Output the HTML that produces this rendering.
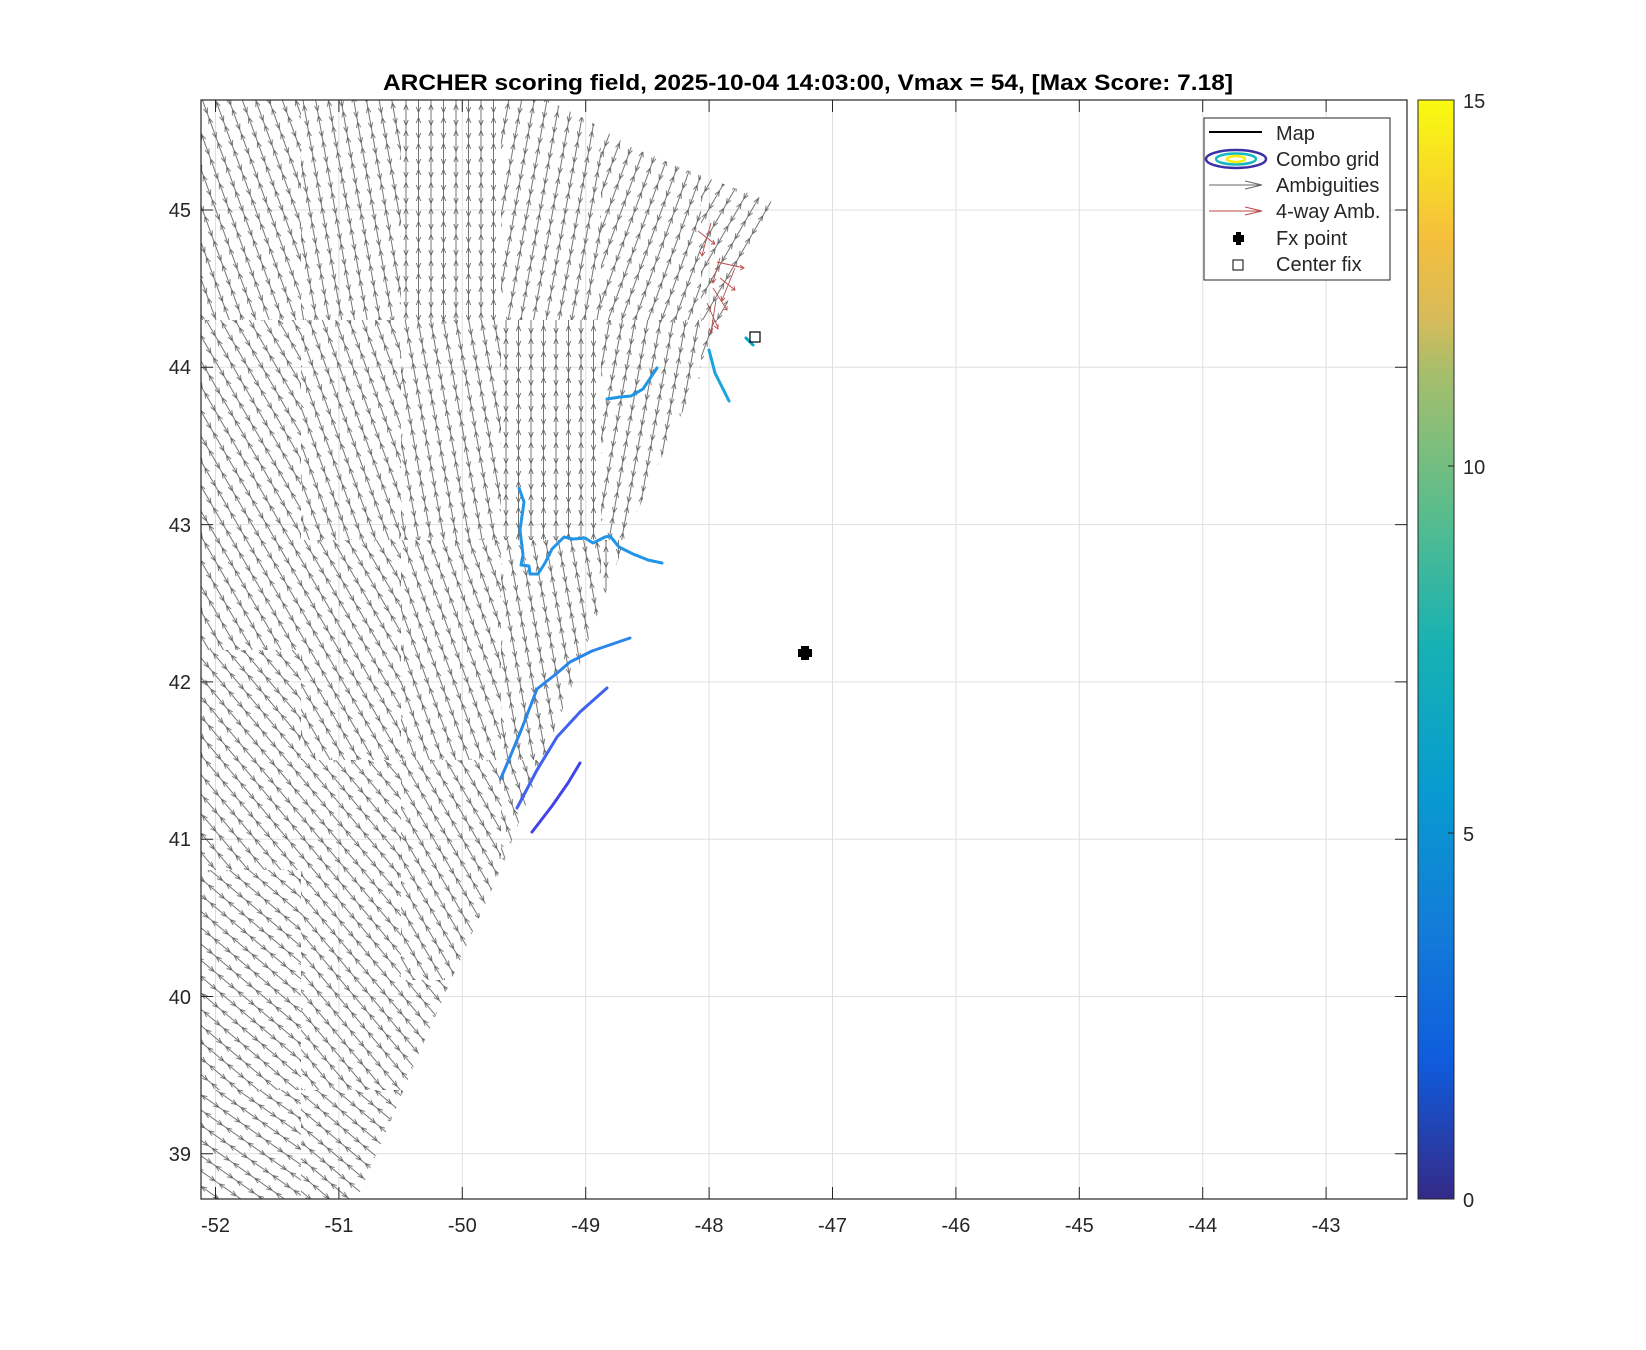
<!DOCTYPE html>
<html><head><meta charset="utf-8"><style>
html,body{margin:0;padding:0;background:#fff;}
svg{display:block;}
text{font-family:"Liberation Sans","DejaVu Sans",sans-serif;fill:#262626;}
</style></head><body>
<svg width="1646" height="1350" viewBox="0 0 1646 1350" xmlns="http://www.w3.org/2000/svg">
<defs>
<linearGradient id="par" x1="0" y1="1" x2="0" y2="0">
<stop offset="0" stop-color="#352a87"/><stop offset="0.125" stop-color="#0f5cdd"/>
<stop offset="0.25" stop-color="#127dd8"/><stop offset="0.375" stop-color="#079ccf"/>
<stop offset="0.5" stop-color="#15b1b4"/><stop offset="0.625" stop-color="#59bd8c"/>
<stop offset="0.75" stop-color="#a5be6b"/><stop offset="0.8" stop-color="#d6bb5a"/><stop offset="0.875" stop-color="#f5bf3c"/>
<stop offset="1" stop-color="#f9fb0e"/></linearGradient>
<g id="tile" stroke="#666" stroke-width="0.9" fill="none">
<path d="M6 0V26M3.8 6L6 0.5L8.2 6M3.8 16L6 21.5L8.2 16"/>
<path d="M18.5 -13V39M16.3 -7L18.5 -12.5L20.7 -7M16.3 3L18.5 8.5L20.7 3M16.3 19L18.5 13.5L20.7 19M16.3 29L18.5 34.5L20.7 29"/>
</g>
<pattern id="p-30" patternUnits="userSpaceOnUse" width="25" height="26" patternTransform="rotate(30)"><use href="#tile"/></pattern>
<pattern id="p-20" patternUnits="userSpaceOnUse" width="25" height="26" patternTransform="rotate(20)"><use href="#tile"/></pattern>
<pattern id="p-10" patternUnits="userSpaceOnUse" width="25" height="26" patternTransform="rotate(10)"><use href="#tile"/></pattern>
<pattern id="p0" patternUnits="userSpaceOnUse" width="25" height="26"><use href="#tile"/></pattern>
<pattern id="p10" patternUnits="userSpaceOnUse" width="25" height="26" patternTransform="rotate(-10)"><use href="#tile"/></pattern>
<pattern id="p20" patternUnits="userSpaceOnUse" width="25" height="26" patternTransform="rotate(-20)"><use href="#tile"/></pattern>
<pattern id="p30" patternUnits="userSpaceOnUse" width="25" height="26" patternTransform="rotate(-30)"><use href="#tile"/></pattern>
<pattern id="p40" patternUnits="userSpaceOnUse" width="25" height="26" patternTransform="rotate(-40)"><use href="#tile"/></pattern>
<pattern id="p50" patternUnits="userSpaceOnUse" width="25" height="26" patternTransform="rotate(-50)"><use href="#tile"/></pattern>
<pattern id="p60" patternUnits="userSpaceOnUse" width="25" height="26" patternTransform="rotate(-55)"><use href="#tile"/></pattern>
<clipPath id="field"><polygon points="201,100 547,100 589,121 631,147 694,173 772,202 736,273 715,347 673,431 631,526 599,610 573,683 536,778 504,862 462,956 420,1051 389,1125 357,1199 201,1199"/></clipPath>
</defs>
<rect x="201" y="100" width="1206" height="1099" fill="#fff"/>
<g stroke="#dfdfdf" stroke-width="1">
<line x1="215.5" y1="100" x2="215.5" y2="1199"/><line x1="338.9" y1="100" x2="338.9" y2="1199"/><line x1="462.3" y1="100" x2="462.3" y2="1199"/><line x1="585.7" y1="100" x2="585.7" y2="1199"/><line x1="709.1" y1="100" x2="709.1" y2="1199"/><line x1="832.5" y1="100" x2="832.5" y2="1199"/><line x1="955.9" y1="100" x2="955.9" y2="1199"/><line x1="1079.3" y1="100" x2="1079.3" y2="1199"/><line x1="1202.7" y1="100" x2="1202.7" y2="1199"/><line x1="1326.1" y1="100" x2="1326.1" y2="1199"/>
<line x1="201" y1="210" x2="1407" y2="210"/><line x1="201" y1="367.3" x2="1407" y2="367.3"/><line x1="201" y1="524.6" x2="1407" y2="524.6"/><line x1="201" y1="681.9" x2="1407" y2="681.9"/><line x1="201" y1="839.2" x2="1407" y2="839.2"/><line x1="201" y1="996.5" x2="1407" y2="996.5"/><line x1="201" y1="1153.8" x2="1407" y2="1153.8"/>
</g>
<g clip-path="url(#field)">
<!-- row0 y100-210 -->
<rect x="201" y="100" width="100" height="110" fill="url(#p20)"/><rect x="301" y="100" width="100" height="110" fill="url(#p10)"/><rect x="401" y="100" width="100" height="110" fill="url(#p0)"/><rect x="501" y="100" width="100" height="110" fill="url(#p-10)"/><rect x="601" y="100" width="100" height="110" fill="url(#p-20)"/><rect x="701" y="100" width="100" height="110" fill="url(#p-30)"/>
<!-- row1 -->
<rect x="201" y="210" width="100" height="110" fill="url(#p20)"/><rect x="301" y="210" width="100" height="110" fill="url(#p10)"/><rect x="401" y="210" width="100" height="110" fill="url(#p0)"/><rect x="501" y="210" width="100" height="110" fill="url(#p-10)"/><rect x="601" y="210" width="100" height="110" fill="url(#p-20)"/><rect x="701" y="210" width="100" height="110" fill="url(#p-30)"/>
<!-- row2 -->
<rect x="201" y="320" width="100" height="110" fill="url(#p30)"/><rect x="301" y="320" width="100" height="110" fill="url(#p20)"/><rect x="401" y="320" width="100" height="110" fill="url(#p10)"/><rect x="501" y="320" width="100" height="110" fill="url(#p0)"/><rect x="601" y="320" width="100" height="110" fill="url(#p-10)"/><rect x="701" y="320" width="100" height="110" fill="url(#p-20)"/>
<!-- row3 -->
<rect x="201" y="430" width="100" height="110" fill="url(#p30)"/><rect x="301" y="430" width="100" height="110" fill="url(#p20)"/><rect x="401" y="430" width="100" height="110" fill="url(#p10)"/><rect x="501" y="430" width="100" height="110" fill="url(#p0)"/><rect x="601" y="430" width="100" height="110" fill="url(#p-10)"/>
<!-- row4 -->
<rect x="201" y="540" width="100" height="110" fill="url(#p30)"/><rect x="301" y="540" width="100" height="110" fill="url(#p30)"/><rect x="401" y="540" width="100" height="110" fill="url(#p20)"/><rect x="501" y="540" width="100" height="110" fill="url(#p10)"/><rect x="601" y="540" width="100" height="110" fill="url(#p0)"/>
<!-- row5 -->
<rect x="201" y="650" width="100" height="110" fill="url(#p40)"/><rect x="301" y="650" width="100" height="110" fill="url(#p30)"/><rect x="401" y="650" width="100" height="110" fill="url(#p20)"/><rect x="501" y="650" width="100" height="110" fill="url(#p10)"/>
<!-- row6 -->
<rect x="201" y="760" width="100" height="110" fill="url(#p40)"/><rect x="301" y="760" width="100" height="110" fill="url(#p40)"/><rect x="401" y="760" width="100" height="110" fill="url(#p30)"/><rect x="501" y="760" width="100" height="110" fill="url(#p20)"/>
<!-- row7 -->
<rect x="201" y="870" width="100" height="110" fill="url(#p50)"/><rect x="301" y="870" width="100" height="110" fill="url(#p40)"/><rect x="401" y="870" width="100" height="110" fill="url(#p30)"/><rect x="501" y="870" width="100" height="110" fill="url(#p20)"/>
<!-- row8 -->
<rect x="201" y="980" width="100" height="110" fill="url(#p50)"/><rect x="301" y="980" width="100" height="110" fill="url(#p40)"/><rect x="401" y="980" width="100" height="110" fill="url(#p40)"/>
<!-- row9 -->
<rect x="201" y="1090" width="100" height="110" fill="url(#p60)"/><rect x="301" y="1090" width="100" height="110" fill="url(#p50)"/><rect x="401" y="1090" width="100" height="110" fill="url(#p40)"/>
</g>
<g stroke="#b84a4a" stroke-width="0.9" fill="none">
<path d="M711 223L702 255M700 252L702 256L705 252"/>
<path d="M698 231L715 244M711 244L715 244L713 240"/>
<path d="M720 258L713 282M711 278L713 283L716 279"/>
<path d="M717 262L744 268M740 265L744 268L740 270"/>
<path d="M720 278L735 290M731 290L735 290L734 286"/>
<path d="M735 268L722 300M721 296L722 301L725 298"/>
<path d="M713 288L727 310M723 309L727 310L727 306"/>
<path d="M707 303L718 328M714 326L718 329L718 324"/>
<path d="M716 300L711 332M709 328L711 333L713 328"/>
</g>
<g fill="none" stroke-linecap="round" stroke-linejoin="round" stroke-width="3">
<polyline stroke="#00aacc" points="746,338 753,345"/>
<polyline stroke="#1aa4dc" points="709,350 715,373 729,401"/>
<polyline stroke="#1e98e4" points="607,399 620,397 631,396 643,389 657,368"/>
<polyline stroke="#2196e8" points="519,488 524,502 520,530 523,555 521,565 529,566 530,574 538,574 545,563 552,549 564,537 573,539 585,538 593,543 605,537 610,536 619,547 633,554 648,560 662,563"/>
<polyline stroke="#2b86ea" points="501,778 510,757 522,728 537,689 556,674 570,662 592,651 630,638"/>
<polyline stroke="#4062ee" points="517,808 537,770 557,737 580,712 607,688"/>
<polyline stroke="#4343ea" points="532,832 552,806 568,783 580,763"/>
</g>
<rect x="750" y="332" width="10" height="10" fill="none" stroke="#000" stroke-width="1.2"/>
<path d="M801 646h8v3h3v8h-3v3h-8v-3h-3v-8h3z" fill="#000"/>
<g stroke="#262626" stroke-width="1">
<path d="M215.5 1199v-12M338.9 1199v-12M462.3 1199v-12M585.7 1199v-12M709.1 1199v-12M832.5 1199v-12M955.9 1199v-12M1079.3 1199v-12M1202.7 1199v-12M1326.1 1199v-12"/>
<path d="M215.5 100v12M338.9 100v12M462.3 100v12M585.7 100v12M709.1 100v12M832.5 100v12M955.9 100v12M1079.3 100v12M1202.7 100v12M1326.1 100v12"/>
<path d="M201 210h12M201 367.3h12M201 524.6h12M201 681.9h12M201 839.2h12M201 996.5h12M201 1153.8h12"/>
<path d="M1407 210h-12M1407 367.3h-12M1407 524.6h-12M1407 681.9h-12M1407 839.2h-12M1407 996.5h-12M1407 1153.8h-12"/>
</g>
<rect x="201" y="100" width="1206" height="1099" fill="none" stroke="#262626" stroke-width="1.2"/>
<g font-size="20" text-anchor="middle">
<text x="215.5" y="1232">-52</text><text x="338.9" y="1232">-51</text><text x="462.3" y="1232">-50</text><text x="585.7" y="1232">-49</text><text x="709.1" y="1232">-48</text><text x="832.5" y="1232">-47</text><text x="955.9" y="1232">-46</text><text x="1079.3" y="1232">-45</text><text x="1202.7" y="1232">-44</text><text x="1326.1" y="1232">-43</text>
</g>
<g font-size="20" text-anchor="end">
<text x="191" y="217">45</text><text x="191" y="374">44</text><text x="191" y="532">43</text><text x="191" y="689">42</text><text x="191" y="846">41</text><text x="191" y="1004">40</text><text x="191" y="1161">39</text>
</g>
<text x="808" y="90" font-size="22" font-weight="bold" text-anchor="middle" textLength="850" lengthAdjust="spacingAndGlyphs" style="fill:#000">ARCHER scoring field, 2025-10-04 14:03:00, Vmax = 54, [Max Score: 7.18]</text>
<rect x="1204" y="118" width="186" height="162" fill="#fff" stroke="#262626" stroke-width="1"/>
<line x1="1209" y1="132" x2="1262" y2="132" stroke="#000" stroke-width="2"/>
<ellipse cx="1236" cy="159" rx="30" ry="9" fill="none" stroke="#3a2fa5" stroke-width="2.5"/>
<ellipse cx="1236" cy="159" rx="20" ry="5.5" fill="none" stroke="#15b8c0" stroke-width="2.5"/>
<ellipse cx="1236" cy="159" rx="9" ry="3" fill="none" stroke="#f5f00a" stroke-width="2.5"/>
<path d="M1209 185H1262M1245 181L1262 185L1245 189" stroke="#666" fill="none" stroke-width="1"/>
<path d="M1209 211H1262M1245 207L1262 211L1245 215" stroke="#b84a4a" fill="none" stroke-width="1"/>
<path d="M1236 232h5v3h3v7h-3v3h-5v-3h-3v-7h3z" fill="#000"/>
<rect x="1233" y="260" width="10" height="10" fill="none" stroke="#000" stroke-width="1"/>
<g font-size="20" style="fill:#000">
<text x="1276" y="140">Map</text>
<text x="1276" y="166">Combo grid</text>
<text x="1276" y="192">Ambiguities</text>
<text x="1276" y="218">4-way Amb.</text>
<text x="1276" y="245">Fx point</text>
<text x="1276" y="271">Center fix</text>
</g>
<rect x="1418" y="100" width="36" height="1099" fill="url(#par)" stroke="#262626" stroke-width="1"/>
<g stroke="#262626"><line x1="1448" y1="466" x2="1454" y2="466"/><line x1="1448" y1="833" x2="1454" y2="833"/></g>
<g font-size="20"><text x="1463" y="108">15</text><text x="1463" y="474">10</text><text x="1463" y="841">5</text><text x="1463" y="1207">0</text></g>
</svg>
</body></html>
